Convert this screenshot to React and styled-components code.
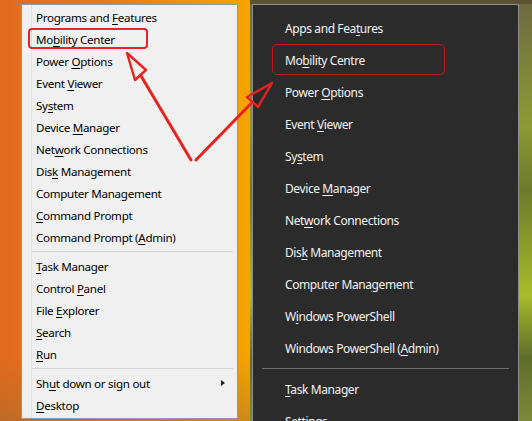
import React from 'react';
import styled, { createGlobalStyle, css } from 'styled-components';

const GlobalStyle = createGlobalStyle`
    html, body {
        margin: 0;
        padding: 0;
        overflow: hidden;
        background: #2b2b2b;
    }
    #root {
        width: 532px;
        height: 421px;
    }
`;

const classicItems = [
    ['Programs and ', 'F', 'eatures'],
    ['Mo', 'b', 'ility Center', 'mark'],
    ['Power ', 'O', 'ptions'],
    ['Event ', 'V', 'iewer'],
    ['Sy', 's', 'tem'],
    ['Device ', 'M', 'anager'],
    ['Net', 'w', 'ork Connections'],
    ['Dis', 'k', ' Management'],
    ['Computer Mana', 'g', 'ement'],
    ['', 'C', 'ommand Prompt'],
    ['Command Prompt (', 'A', 'dmin)'],
    '-',
    ['', 'T', 'ask Manager'],
    ['Control ', 'P', 'anel'],
    ['File ', 'E', 'xplorer'],
    ['', 'S', 'earch'],
    ['', 'R', 'un'],
    '-',
    ['Sh', 'u', 't down or sign out', 'sub'],
    ['', 'D', 'esktop'],
];

const darkItems = [
    ['Apps and Fea', 't', 'ures'],
    ['Mo', 'b', 'ility Centre', 'mark'],
    ['Power ', 'O', 'ptions'],
    ['Event ', 'V', 'iewer'],
    ['Sy', 's', 'tem'],
    ['Device ', 'M', 'anager'],
    ['Net', 'w', 'ork Connections'],
    ['Dis', 'k', ' Management'],
    ['Computer Mana', 'g', 'ement'],
    ['W', 'i', 'ndows PowerShell'],
    ['Windows PowerShell (', 'A', 'dmin)'],
    '-',
    ['', 'T', 'ask Manager'],
    ['Se', 't', 'tings'],
];

function Label({ item }) {
    return (
        <span>{item[0]}<u>{item[1]}</u>{item[2]}</span>
    );
}

function App() {
    return (
        <Screen>
            <GlobalStyle />
            <OrangeDesk>
                <ClassicMenu>
                    {classicItems.map((item, i) =>
                        item === '-' ? <ClassicSeparator key={i} /> : (
                            <ClassicItem key={i} $marked={item[3] === 'mark'}>
                                <Label item={item} />
                                {item[3] === 'sub' && <SubArrow />}
                            </ClassicItem>
                        )
                    )}
                </ClassicMenu>
            </OrangeDesk>
            <GreenDesk>
                <DarkMenu>
                    {darkItems.map((item, i) =>
                        item === '-' ? <DarkSeparator key={i} /> : (
                            <DarkItem key={i} $marked={item[3] === 'mark'}>
                                <Label item={item} />
                            </DarkItem>
                        )
                    )}
                </DarkMenu>
            </GreenDesk>
            <Arrows viewBox="0 0 532 421" width="532" height="421">
                <g stroke="#e8231f" strokeWidth="3" strokeLinecap="round" strokeLinejoin="round" fill="none">
                    <line x1="191" y1="160" x2="140.5" y2="75" />
                    <polygon points="127,53 135,80 146,70" strokeWidth="2.4" />
                    <line x1="196" y1="160" x2="252.5" y2="102" />
                    <polygon points="272,83 247,97 258,107" strokeWidth="2.4" />
                </g>
            </Arrows>
        </Screen>
    );
}

const Screen = styled.div`
    position: relative;
    display: flex;
    width: 532px;
    height: 421px;
    overflow: hidden;
    font-family: "Noto Sans", "Open Sans", sans-serif;
`;

const OrangeDesk = styled.div`
    width: 250px;
    flex-shrink: 0;
    box-sizing: border-box;
    padding: 4px 12px 0 21px;
    background:
        linear-gradient(to bottom, rgba(0,0,0,0) 85%, rgba(150,110,50,0.45) 100%),
        linear-gradient(to right, #e2691f 0%, #e67a1c 40%, #f09612 80%, #f5a400 100%);
`;

const ClassicMenu = styled.div`
    position: relative;
    box-sizing: border-box;
    height: 415px;
    padding: 1px 0 0;
    background: #f0f0f0;
    border: 1px solid #979797;
    &::before {
        content: "";
        position: absolute;
        top: 0;
        bottom: 0;
        left: 9px;
        width: 1px;
        background: #e0e0e0;
    }
`;

const ClassicItem = styled.div`
    position: relative;
    display: flex;
    align-items: center;
    height: 22px;
    padding-left: 14px;
    font-size: 11.6px;
    letter-spacing: -0.3px;
    color: #000;
    white-space: nowrap;
    u { text-underline-offset: 2px; }
    ${p => p.$marked && css`
        &::after {
            content: "";
            position: absolute;
            left: 6px;
            top: 0;
            width: 116px;
            height: 17px;
            border: 2px solid #e5232a;
            border-radius: 4px;
        }
    `}
`;

const SubArrow = styled.span`
    position: absolute;
    right: 12px;
    top: 8px;
    width: 0;
    height: 0;
    border-top: 3.5px solid transparent;
    border-bottom: 3.5px solid transparent;
    border-left: 4px solid #222;
`;

const ClassicSeparator = styled.div`
    height: 7px;
    margin-left: 10px;
    margin-right: 4px;
    background: linear-gradient(#d7d7d7, #d7d7d7) no-repeat 0 3px / 100% 1px;
`;

const GreenDesk = styled.div`
    flex: 1;
    padding: 4px 0 0 2px;
    background:
        linear-gradient(to bottom, #5a5433 0px, #5a5433 4px, rgba(0,0,0,0) 4px),
        linear-gradient(to bottom, #6c6a40 0%, #8d9a34 30%, #6d7a2c 45%, #a7bb2a 70%, #5f6d2b 85%, #7d8a3a 100%);
`;

const DarkMenu = styled.div`
    width: 267px;
    height: 440px;
    box-sizing: border-box;
    padding-top: 7px;
    background: #2b2b2b;
    border: 1px solid #8c8c8c;
    border-bottom: none;
`;

const DarkItem = styled.div`
    position: relative;
    display: flex;
    align-items: center;
    height: 32px;
    padding-left: 32px;
    font-size: 12px;
    letter-spacing: -0.4px;
    color: #f2f2f2;
    white-space: nowrap;
    u { text-underline-offset: 2px; }
    ${p => p.$marked && css`
        &::after {
            content: "";
            position: absolute;
            left: 19px;
            top: 0;
            width: 171px;
            height: 29px;
            border: 1.5px solid #c8141c;
            border-radius: 5px;
        }
    `}
`;

const DarkSeparator = styled.div`
    height: 9px;
    margin: 0 9px;
    background: linear-gradient(#6e6e6e, #6e6e6e) no-repeat 0 4px / 100% 1px;
`;

const Arrows = styled.svg`
    position: absolute;
    left: 0;
    top: 0;
    pointer-events: none;
`;

export default App;
